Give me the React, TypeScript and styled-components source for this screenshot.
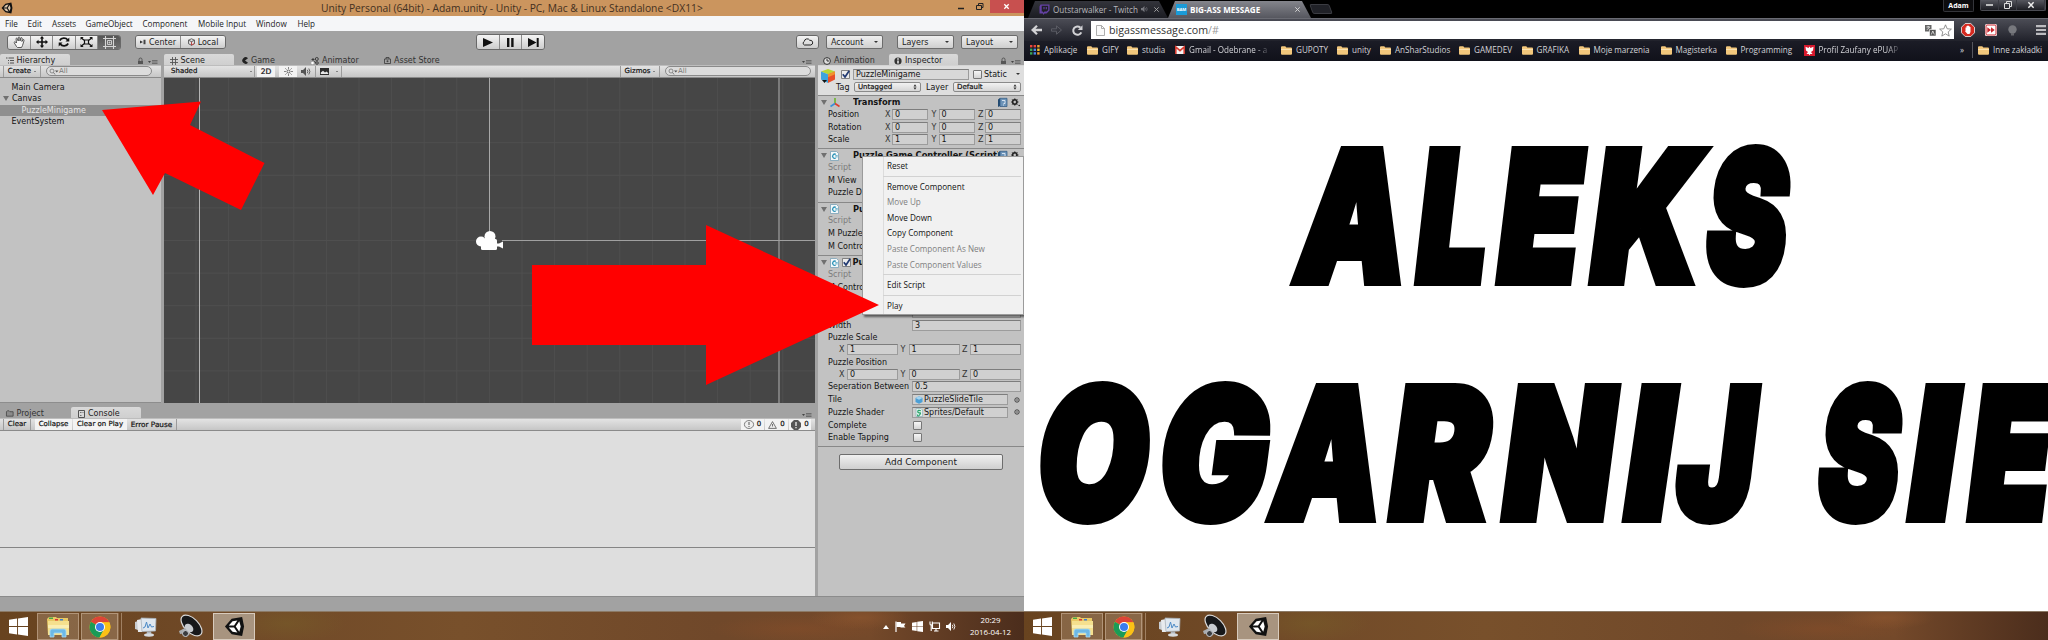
import React from "react";
import styled, { createGlobalStyle, css } from "styled-components";

const UNITY_FONT = '"DejaVu Sans", Verdana, sans-serif';
const SEGOE_FONT = '"Open Sans", "Segoe UI", sans-serif';

const Global = createGlobalStyle`
  * { box-sizing: border-box; }
  html, body { margin: 0; padding: 0; background: #fff; }
  svg { display: block; flex: none; overflow: visible; }
`;

/* ---------- shell ---------- */
const Desktop = styled.div`
  display: flex;
  width: 2048px;
  height: 640px;
  overflow: hidden;
`;
const Monitor = styled.section`
  position: relative;
  display: flex;
  flex-direction: column;
  width: 1024px;
  height: 640px;
  overflow: hidden;
  background: #fff;
`;
const Spacer = styled.div`
  flex: 1;
`;
const Gap = styled.div<{ $w: number }>`
  flex: none;
  width: ${(p) => p.$w}px;
`;

/* ---------- Unity window ---------- */
const UnityWindow = styled.div`
  display: flex;
  flex-direction: column;
  height: 611px;
  font: 8px/11px ${UNITY_FONT};
  color: #141414;
  white-space: nowrap;
`;
const TitleBar = styled.header`
  display: flex;
  flex: none;
  height: 16px;
  background: #cb955e;
  font: 10.29px/16px ${SEGOE_FONT};
  color: #43301f;
`;
const TitleIcon = styled.div`
  width: 321px;
  padding: 2px 0 0 1px;
`;
const WindowButtons = styled.div`
  display: flex;
  height: 13px;
  align-items: center;
`;
const CloseButton = styled.div`
  display: flex;
  align-items: center;
  justify-content: center;
  width: 34px;
  height: 13px;
  padding-right: 2px;
  background: #c8504f;
`;
const MenuBar = styled.nav`
  display: flex;
  flex: none;
  height: 15px;
  padding-left: 5px;
  background: #f5f6f8;
  font: 8.15px/15px ${SEGOE_FONT};
  color: #1c1c1c;
`;
const MenuEntry = styled.span<{ $w: number }>`
  width: ${(p) => p.$w}px;
`;
const Toolbar = styled.div`
  display: flex;
  flex: none;
  align-items: center;
  height: 23px;
  padding: 0 6px 1px 7px;
  background: #a2a2a2;
`;
const ButtonGroup = styled.div<{ $h?: number }>`
  display: flex;
  height: ${(p) => p.$h ?? 15}px;
  border: 1px solid #686868;
  border-radius: 3px;
  overflow: hidden;
`;
const ToolButton = styled.button<{ $w: number; $pressed?: boolean }>`
  display: flex;
  align-items: center;
  justify-content: center;
  gap: 3px;
  width: ${(p) => p.$w}px;
  padding: 0;
  border: 0;
  border-right: 1px solid #8b8b8b;
  font: inherit;
  color: #222;
  background: ${(p) => (p.$pressed ? "linear-gradient(#555,#707070)" : "linear-gradient(#f4f4f4,#cdcdcd)")};
  &:last-child { border-right: 0; }
`;
const DropButton = styled.button<{ $w: number }>`
  display: flex;
  align-items: center;
  justify-content: space-between;
  width: ${(p) => p.$w}px;
  height: 14px;
  padding: 0 4px;
  border: 1px solid #6c6c6c;
  border-radius: 2px;
  font: inherit;
  color: #222;
  background: linear-gradient(#efefef, #cfcfcf);
`;
const Caret = styled.i<{ $s?: number }>`
  border: solid transparent;
  border-width: ${(p) => p.$s ?? 2.5}px ${(p) => p.$s ?? 2.5}px 0;
  border-top-color: #333;
`;
const Workspace = styled.div`
  display: flex;
  flex: none;
  height: 542px;
  background: #a2a2a2;
`;
const DockColumn = styled.div`
  display: flex;
  flex-direction: column;
  width: 818px;
`;
const UpperDock = styled.div`
  display: flex;
  height: 349px;
`;
const Panel = styled.div<{ $w: number; $edge?: boolean }>`
  display: flex;
  flex-direction: column;
  width: ${(p) => p.$w}px;
  ${(p) => p.$edge && css`margin-right: 3px;`}
`;
const TabRow = styled.div<{ $h?: number }>`
  display: flex;
  flex: none;
  align-items: flex-end;
  height: ${(p) => p.$h ?? 11}px;
`;
const Tab = styled.div<{ $w: number; $on?: boolean; $pad?: number }>`
  display: flex;
  align-items: center;
  gap: 3px;
  width: ${(p) => p.$w}px;
  height: 11px;
  padding-top: 2px;
  padding-left: ${(p) => p.$pad ?? 6}px;
  border-radius: 2px 2px 0 0;
  color: ${(p) => (p.$on ? "#1c1c1c" : "#333")};
  ${(p) => p.$on && css`background: linear-gradient(#d9d9d9, #cfcfcf);`}
`;
const TabTools = styled.div`
  display: flex;
  align-items: flex-end;
  gap: 5px;
  margin-left: auto;
  padding: 0 3px 1px 0;
`;
const Strip = styled.div`
  display: flex;
  flex: none;
  align-items: stretch;
  height: 13px;
  border-bottom: 1px solid #8a8a8a;
  border-top: 1px solid #bdbdbd;
  background: linear-gradient(#e3e3e3, #c6c6c6);
  font-size: 7px;
  color: #111;
  -webkit-text-stroke: 0.2px #111;
`;
const StripCell = styled.div<{ $w: number; $on?: boolean; $line?: boolean; $size?: number }>`
  display: flex;
  flex: none;
  align-items: center;
  justify-content: center;
  gap: 3px;
  width: ${(p) => p.$w}px;
  font-size: ${(p) => p.$size ?? 7}px;
  ${(p) => p.$on && css`background: #f3f3f3;`}
  ${(p) => p.$line && css`border-right: 1px solid #9b9b9b;`}
`;
const StripText = styled.span<{ $w: number }>`
  flex: none;
  width: ${(p) => p.$w}px;
`;
const SearchField = styled.div<{ $w: number }>`
  display: flex;
  align-items: center;
  width: ${(p) => p.$w}px;
  height: 10px;
  margin-top: 0;
  padding-left: 2px;
  border: 1px solid #8a8a8a;
  border-radius: 5px;
  background: #dcdcdc;
  color: #777;
  font-size: 7px;
  -webkit-text-stroke: 0;
`;
const HierarchyList = styled.div`
  flex: 1;
  padding-top: 3.800px;
  background: #c2c2c2;
  border-bottom: 1px solid #8d8d8d;
`;
const HierarchyRow = styled.div<{ $indent: number; $on?: boolean }>`
  display: flex;
  align-items: center;
  gap: 3px;
  height: 11.4px;
  padding-left: ${(p) => p.$indent}px;
  ${(p) => p.$on && css`background: #8f8f8f; color: #e6e6e6;`}
`;
const SceneView = styled.div`
  flex: 1;
  overflow: hidden;
  background: #464646;
`;
const ConsoleBody = styled.div`
  display: flex;
  flex-direction: column;
  width: 815px;
  flex: 1;
  background: #dedede;
`;
const ConsoleLog = styled.div`
  height: 117px;
  border-bottom: 1px solid #858585;
`;
const StatusBar = styled.footer`
  flex: none;
  height: 15px;
  background: #a2a2a2;
  border-top: 1px solid #8b8b8b;
`;

/* ---------- Inspector ---------- */
const InspectorPanel = styled.aside`
  display: flex;
  flex-direction: column;
  width: 206px;
`;
const InspectorBody = styled.div`
  flex: 1;
  background: #c2c2c2;
`;
const ObjectHeader = styled.div`
  display: flex;
  height: 30px;
  padding: 2px 2px 0 2px;
  border-top: 1px solid #d4d4d4;
  background: #dedede;
`;
const ObjectFields = styled.div`
  flex: 1;
  display: flex;
  flex-direction: column;
`;
const HeaderLine = styled.div<{ $h: number }>`
  display: flex;
  align-items: center;
  height: ${(p) => p.$h}px;
`;
const Popup = styled.div<{ $w: number }>`
  display: flex;
  align-items: center;
  justify-content: space-between;
  width: ${(p) => p.$w}px;
  height: 10px;
  padding: 0 3px;
  border: 1px solid #8a8a8a;
  border-radius: 2px;
  background: linear-gradient(#f2f2f2, #d6d6d6);
  font-size: 7px;
  -webkit-text-stroke: 0.2px #111;
`;
const Check = styled.span`
  flex: none;
  width: 9px;
  height: 9px;
  border: 1px solid #777;
  border-radius: 1px;
  background: linear-gradient(#f6f6f6, #d4d4d4);
`;
const Field = styled.span<{ $w: number; $light?: boolean }>`
  display: flex;
  flex: none;
  align-items: center;
  gap: 1px;
  width: ${(p) => p.$w}px;
  height: 11px;
  padding-left: 2px;
  border: 1px solid #9c9c9c;
  border-top-color: #7d7d7d;
  background: ${(p) => (p.$light ? "#d8d8d8" : "#d0d0d0")};
`;
const ComponentBlock = styled.div<{ $h: number }>`
  height: ${(p) => p.$h}px;
  overflow: hidden;
  border-top: 1px solid #888;
`;
const ComponentHead = styled.div`
  display: flex;
  align-items: center;
  height: 12px;
  padding: 1px 4px 0 3px;
  font-weight: bold;
  font-size: 8.3px;
`;
const HeadIcons = styled.div<{ $w: number }>`
  display: flex;
  flex: none;
  align-items: center;
  gap: 3px;
  width: ${(p) => p.$w}px;
`;
const HeadTitle = styled.span`
  flex: 1;
  min-width: 0;
  overflow: hidden;
`;
const PropRow = styled.div<{ $h?: number; $dim?: boolean }>`
  display: flex;
  align-items: center;
  height: ${(p) => p.$h ?? 12.7}px;
  padding-left: 10px;
  ${(p) => p.$dim && css`color: #7c7c7c;`}
`;
const PropLabel = styled.span<{ $w: number }>`
  flex: none;
  width: ${(p) => p.$w}px;
`;
const Axis = styled.span<{ $w: number }>`
  flex: none;
  width: ${(p) => p.$w}px;
  color: #333;
`;
const AddArea = styled.div`
  padding: 7px 0 0 21px;
  border-top: 1px solid #888;
`;
const AddButton = styled.button`
  display: block;
  width: 164px;
  height: 16px;
  padding: 0;
  border: 1px solid #6d6d6d;
  border-radius: 2px;
  background: linear-gradient(#f0f0f0, #cfcfcf);
  font: 8.93px/14px ${UNITY_FONT};
  color: #222;
`;

/* ---------- context menu and arrows (overlays) ---------- */
const ContextMenu = styled.div`
  position: absolute;
  left: 862px;
  top: 156px;
  width: 161.5px;
  height: 159px;
  padding: 1px 2px 1px 20px;
  border: 1px solid #9b9b9b;
  background: linear-gradient(90deg, #f1f1f1 20px, #dcdcdc 20px, #dcdcdc 21px, #f1f1f1 21px);
  box-shadow: 2px 2px 2px rgba(0, 0, 0, 0.55);
  font: 8.15px/15.65px ${SEGOE_FONT};
  white-space: nowrap;
`;
const MenuItem = styled.div<{ $dim?: boolean }>`
  height: 15.65px;
  padding-left: 4px;
  color: ${(p) => (p.$dim ? "#808080" : "#111")};
`;
const MenuRule = styled.hr`
  height: 1px;
  margin: 2px 0 1.9px;
  border: 0;
  background: #d2d2d2;
`;
const ArrowLayer = styled.svg`
  position: absolute;
  left: 0;
  top: 0;
`;

/* ---------- taskbar ---------- */
const TaskbarRow = styled.footer`
  display: flex;
  flex: none;
  align-items: center;
  height: 29px;
  margin-top: auto;
  padding-top: 1px;
  border-top: 1px solid #8c7a66;
  background:
    radial-gradient(ellipse 60px 20px at 28% 40%, rgba(120, 95, 40, 0.5), transparent),
    radial-gradient(ellipse 90px 14px at 78% 60%, rgba(150, 80, 40, 0.3), transparent),
    radial-gradient(ellipse 50px 12px at 84% 20%, rgba(160, 95, 50, 0.4), transparent),
    linear-gradient(90deg, #68431f, #714a28 25%, #78502b 45%, #70482a 70%, #74492a 85%, #4b2d1c);
`;
const TaskSlot = styled.div<{ $w: number; $state?: "open" | "active" }>`
  display: flex;
  flex: none;
  align-items: center;
  justify-content: center;
  width: ${(p) => p.$w}px;
  height: 27px;
  ${(p) => p.$state === "open" && css`background: rgba(255, 235, 215, 0.2); border: 1px solid rgba(255, 235, 215, 0.35);`}
  ${(p) => p.$state === "active" && css`background: #a8947f; border: 1px solid #d8cbbd;`}
`;
const StackEdge = styled.div`
  width: 4px;
  height: 27px;
  margin-right: 10px;
  border-right: 1px solid rgba(255, 235, 215, 0.35);
  border-left: 1px solid rgba(255, 235, 215, 0.2);
`;
const Tray = styled.div`
  display: flex;
  align-items: center;
  gap: 6px;
  margin-left: auto;
`;
const Clock = styled.div`
  width: 55px;
  margin: -2px 6px 0 1px;
  font: 7.9px/12px ${SEGOE_FONT};
  text-align: center;
  color: #fff;
`;

/* ---------- browser ---------- */
const TabStrip = styled.div`
  display: flex;
  flex: none;
  height: 18px;
  background: #000;
  font: 8.1px/16px ${SEGOE_FONT};
  white-space: nowrap;
`;
const BrowserTab = styled.div<{ $w: number; $on?: boolean; $pad: number }>`
  display: flex;
  flex: none;
  align-items: center;
  gap: 3px;
  width: ${(p) => p.$w}px;
  height: 17px;
  margin-top: 1px;
  padding: 0 9px 0 ${(p) => p.$pad}px;
  clip-path: polygon(7px 0, calc(100% - 9px) 0, 100% 100%, 0 100%);
  background: ${(p) => (p.$on ? "linear-gradient(#84858c,#56575f)" : "linear-gradient(#33343b,#1b1c22)")};
  color: ${(p) => (p.$on ? "#fff" : "#b9b9bd")};
  font-weight: ${(p) => (p.$on ? 700 : 400)};
`;
const TabTitle = styled.span<{ $w: number }>`
  width: ${(p) => p.$w}px;
`;
const NewTab = styled.div`
  width: 20px;
  height: 10px;
  margin: 4px 0 0 0;
  border: 1px solid #3b3c42;
  border-radius: 2px;
  transform: skewX(20deg);
  background: #202127;
`;
const UserChip = styled.div`
  width: 31px;
  height: 12px;
  margin-right: 6px;
  border: 1px solid #34353a;
  border-top: 0;
  border-radius: 0 0 2px 2px;
  background: #0c0c0e;
  color: #fff;
  font: bold 7px/12px ${SEGOE_FONT};
  text-align: center;
`;
const ChromeControls = styled.div`
  display: flex;
  width: 66px;
  height: 11px;
  margin-right: 2px;
  border: 1px solid #4a4b52;
  border-top: 0;
  border-radius: 0 0 2px 2px;
  background: linear-gradient(#55565e, #1d1e24);
`;
const ChromeControl = styled.div<{ $w: number }>`
  display: flex;
  align-items: center;
  justify-content: center;
  width: ${(p) => p.$w}px;
  border-right: 1px solid #3a3b42;
`;
const NavBar = styled.div`
  display: flex;
  flex: none;
  align-items: center;
  height: 23px;
  padding: 0 2px 0 7px;
  border-top: 1px solid #6a6b73;
  background: linear-gradient(#4b4c55, #21222b);
`;
const AddressBox = styled.div`
  display: flex;
  align-items: center;
  width: 863px;
  height: 18px;
  margin: 0 7px 0 8px;
  padding: 0 2px 0 5px;
  background: #fff;
  font: 10.68px/18px ${SEGOE_FONT};
  color: #333;
`;
const UrlText = styled.span`
  margin-left: 4px;
  em { font-style: normal; color: #999; }
`;
const BookmarkBar = styled.div`
  display: flex;
  flex: none;
  align-items: center;
  height: 20px;
  padding-left: 6px;
  padding-bottom: 2px;
  background: linear-gradient(#1b1c26, #10111a);
  font: 8.1px/14px ${SEGOE_FONT};
  color: #d4d4d8;
  white-space: nowrap;
`;
const Bookmark = styled.div<{ $w: number; $fade?: number }>`
  display: flex;
  flex: none;
  align-items: center;
  gap: 4px;
  width: ${(p) => p.$w}px;
  ${(p) => p.$fade && css`-webkit-mask-image: linear-gradient(90deg, #000 ${p.$fade - 15}px, transparent ${p.$fade}px);`}
`;
const BarDivider = styled.i`
  width: 1px;
  height: 16px;
  margin-right: 5px;
  background: #55565e;
`;
const Page = styled.main`
  flex: 1;
  padding-top: 55px;
  overflow: hidden;
  background: #fff;
`;
const BigLine = styled.div<{ $left: number }>`
  display: flex;
  height: 236.6px;
  padding-left: ${(p) => p.$left}px;
  font: italic 900 179px/200px Inter, sans-serif;
  color: #000;
  -webkit-text-stroke: 10px #000;
`;
const BigLetter = styled.span<{ $advance: number; $stretch: number; $shift: number }>`
  flex: none;
  display: block;
  width: ${(p) => p.$advance}px;
  transform-origin: 0 0;
  transform: translateX(${(p) => p.$shift}px) scaleX(${(p) => p.$stretch});
`;

/* ---------- icons ---------- */
const Fold = () => (
  <svg width="6" height="5" viewBox="0 0 6 5"><path d="M0 0h6L3 5z" fill="#707070" /></svg>
);
const UnityLogo = ({ size = 11, plate = "#fff" }: { size?: number; plate?: string }) => (
  <svg width={size} height={size} viewBox="0 0 22 22">
    <path d="M1 11 8 3l11-2 2 10-2 10-11-2z" fill="#111" />
    <path d="M5 10 9 5.500l5-.8-3.500 5.300zM5 12h5.500l3.500 5.300-5-.8zM12.300 11l3.700-5.600 1.500 5.600-1.500 5.600z" fill={plate} />
  </svg>
);
const PanelMenu = () => (
  <svg width="10" height="4" viewBox="0 0 10 4"><path d="M0 1h3L1.500 3z" fill="#444" /><path d="M4 .5h5.500M4 2h5.500M4 3.500h5.500" stroke="#666" strokeWidth=".9" /></svg>
);
const Lock = () => (
  <svg width="5" height="6" viewBox="0 0 5 6"><path d="M1 3V1.500a1.500 1.500 0 0 1 3 0V3" fill="none" stroke="#555" /><path d="M0 3h5v3H0z" fill="#555" /></svg>
);
const Magnifier = () => (
  <svg width="10" height="7" viewBox="0 0 10 7"><circle cx="3" cy="3" r="2" fill="none" stroke="#777" strokeWidth=".8" /><path d="M4.500 4.500 6 6.500" stroke="#777" /><path d="M6 2.500h3.500L7.750 4.500z" fill="#555" /></svg>
);
const SceneIcon = () => (
  <svg width="8" height="8" viewBox="0 0 8 8"><path d="M2.500 0v8M5.500 0v8M0 2.500h8M0 5.500h8" stroke="#555" strokeWidth=".9" /></svg>
);
const GameIcon = () => (
  <svg width="6" height="7" viewBox="0 0 6 7"><path d="M6 1.200A3.300 3.300 0 1 0 6 5.800L3 3.500z" fill="#222" /></svg>
);
const AnimatorIcon = () => (
  <svg width="8" height="8" viewBox="0 0 8 8"><g fill="none" stroke="#333" strokeWidth=".9"><circle cx="5.800" cy="2" r="1.500" /><circle cx="6" cy="6" r="1.300" /><path d="M2 1v3M.5 2.500h3M3 4.500l2 1" /></g><circle cx="1.500" cy="6" r="1.300" fill="#fff" /></svg>
);
const StoreIcon = () => (
  <svg width="7" height="7" viewBox="0 0 7 7"><path d="M.5 2h6v4.500h-6zM2 2V.5h3V2" fill="none" stroke="#444" strokeWidth=".9" /><circle cx="3.500" cy="4.200" r="1" fill="#444" /></svg>
);
const ListIcon = () => (
  <svg width="8" height="7" viewBox="0 0 8 7"><path d="M0 1h1.500M2.500 1H8M2 3.500h1M4 3.500h4M2 6h1M4 6h4" stroke="#444" strokeWidth=".9" /></svg>
);
const FolderOutline = () => (
  <svg width="8" height="7" viewBox="0 0 9 7"><path d="M.5 6.500v-5l1-1h2l1 1h3.500v5z" fill="#8b8b8b" stroke="#444" strokeWidth=".9" /></svg>
);
const ConsoleIcon = () => (
  <svg width="7" height="8" viewBox="0 0 7 8"><path d="M.5.5h6v7h-6z" fill="#d8d8d8" stroke="#444" strokeWidth=".9" /><path d="M2 2.500h1.500M2 5.500h1.500M4.500 2.500h1" stroke="#555" strokeWidth=".8" /></svg>
);
const HandIcon = () => (
  <svg width="13" height="12" viewBox="0 0 13 12"><path d="M3.500 10.500 1 6.500q.5-1.200 1.800-.2l.7.7L3 2.500q.9-.9 1.500.3L5.200 5 5.300 1.300q.9-.9 1.500.2L7 5l.9-3.200q1-.6 1.300.5L8.900 5.500l1.300-2q1.100 0 .8 1.200L9.500 9.500 8.500 11.500h-4z" fill="#f6f6f6" stroke="#333" strokeWidth=".8" /></svg>
);
const MoveIcon = () => (
  <svg width="12" height="12" viewBox="0 0 12 12"><path d="M6 0l2.200 2.500H6.800v2.700h2.700V3.800L12 6 9.500 8.200V6.800H6.800v2.700h1.400L6 12 3.800 9.500h1.400V6.800H2.500v1.400L0 6l2.500-2.200v1.400h2.700V2.500H3.800z" fill="#111" /></svg>
);
const RotateIcon = () => (
  <svg width="12" height="12" viewBox="0 0 12 12"><path d="M1.800 4.500A4.500 3.800 0 0 1 9.800 4M10.200 7.500A4.500 3.800 0 0 1 2.200 8" fill="none" stroke="#111" strokeWidth="1.700" /><path d="M11.300 1.500v4H7.500zM.7 10.500v-4h3.800z" fill="#111" /></svg>
);
const ScaleIcon = () => (
  <svg width="13" height="12" viewBox="0 0 13 12"><path d="M4.500 4h4v4h-4z" fill="none" stroke="#111" strokeWidth="1.200" /><path d="M.5 1h3.200L.5 3.900zM12.500 1v2.900L9.300 1zM.5 11V8.100L3.700 11zM12.500 11H9.300l3.200-2.900z" fill="#111" /><path d="M1.500 2 4 4.300M11.500 2 9 4.300M1.500 10 4 7.700M11.500 10 9 7.700" stroke="#111" strokeWidth="1.200" /></svg>
);
const RectIcon = () => (
  <svg width="13" height="13" viewBox="0 0 13 13"><path d="M2.500 0v13M10.500 0v13M0 2.500h13M0 10.500h13" stroke="#d5d5d5" strokeWidth="1.100" /><path d="M4.500 4.500h4v4h-4z" fill="none" stroke="#ccc" /><circle cx="6.500" cy="6.500" r="1" fill="#ccc" /></svg>
);
const PivotIcon = () => (
  <svg width="6" height="6" viewBox="0 0 6 6"><path d="M0 1.500 3 3 0 4.500z" fill="#333" /><path d="M3.500.8h2v4.400h-2z" fill="#444" /></svg>
);
const LocalIcon = () => (
  <svg width="7" height="8" viewBox="0 0 7 8"><path d="M.5 2.200 3.500.8l3 1.400v3.500l-3 1.600-3-1.600zM.5 2.200l3 1.500 3-1.500M3.500 3.700v3.500" fill="none" stroke="#444" strokeWidth=".8" /><path d="M3.500 3.800v3.200l3-1.500" fill="none" stroke="#c44" strokeWidth=".8" /></svg>
);
const PlayIcon = () => <svg width="10" height="9" viewBox="0 0 10 9"><path d="M0 0l10 4.500L0 9z" fill="#111" /></svg>;
const PauseIcon = () => <svg width="7" height="9" viewBox="0 0 7 9"><path d="M0 0h2.400v9H0zM4.200 0h2.400v9H4.200z" fill="#111" /></svg>;
const StepIcon = () => <svg width="11" height="9" viewBox="0 0 11 9"><path d="M0 0l8.500 4.500L0 9zM8.700 0h2v9h-2z" fill="#111" /></svg>;
const CloudIcon = () => (
  <svg width="11" height="8" viewBox="0 0 11 8"><path d="M2.300 7A2 2 0 0 1 2.300 3.400 2.900 2.900 0 0 1 7.700 2.300 2.400 2.400 0 0 1 8.800 7z" fill="none" stroke="#222" /></svg>
);
const SunIcon = () => (
  <svg width="9" height="9" viewBox="0 0 9 9"><circle cx="4.500" cy="4.500" r="1.500" fill="none" stroke="#444" strokeWidth=".8" /><path d="M4.500 0v2M4.500 7v2M0 4.500h2M7 4.500h2M1.300 1.300l1.300 1.300M6.400 6.400l1.300 1.300M1.300 7.700l1.300-1.300M6.400 2.600l1.300-1.300" stroke="#555" strokeWidth=".7" /></svg>
);
const SoundIcon = ({ color = "#555", s = 10 }: { color?: string; s?: number }) => (
  <svg width={s} height={s * 0.9} viewBox="0 0 10 9"><path d="M0 3h2l3-3v9L2 6H0z" fill={color} /><path d="M6.300 2.800q1.200 1.700 0 3.400M7.800 1.500q2.200 3 0 6" fill="none" stroke={color} strokeWidth=".9" /></svg>
);
const PictureIcon = () => (
  <svg width="9" height="7" viewBox="0 0 9 7"><path d="M0 0h9v7H0z" fill="#2c2c2c" /><path d="M.8 6V4.500L3 2.800l2 1.700 1.500-1L8.200 5v1z" fill="#e8e8e8" /></svg>
);
const ClockIcon = () => (
  <svg width="8" height="8" viewBox="0 0 8 8"><circle cx="4" cy="4" r="3.400" fill="#ddd" stroke="#222" strokeWidth=".9" /><path d="M4 1.800V4h2" fill="none" stroke="#222" strokeWidth=".9" /></svg>
);
const InfoIcon = () => (
  <svg width="8" height="8" viewBox="0 0 8 8"><circle cx="4" cy="4" r="3.600" fill="#333" /><path d="M4 1.300v1.400M4 3.500v3" stroke="#fff" strokeWidth="1.400" /></svg>
);
const CubeIcon = () => (
  <svg width="16" height="17" viewBox="0 0 16 17"><path d="M8 1l7 2.500-7 2.700L1 3.500z" fill="#b9d634" /><path d="M1 3.500l7 2.700V15l-7-3.500z" fill="#3fa4dc" /><path d="M15 3.500 8 6.200V15l7-3.500z" fill="#e8502a" /><path d="M15 3.500 8 6.200v3l7-3z" fill="#f2932c" /><path d="M2 12h5L4.500 15z" fill="#111" /></svg>
);
const AxesIcon = () => (
  <svg width="10" height="9" viewBox="0 0 10 9"><path d="M5 5.500V0" stroke="#6cb52d" strokeWidth="1.600" /><path d="M5 5.500.5 8.500" stroke="#3a8fd8" strokeWidth="1.600" /><path d="M5 5.500 9.500 8.500" stroke="#e03c2b" strokeWidth="1.600" /></svg>
);
const ScriptIcon = () => (
  <svg width="9" height="10" viewBox="0 0 9 10"><path d="M.5.5h6L8.500 2.500v7h-8z" fill="#f4f8fa" stroke="#7aa2b8" strokeWidth=".8" /><path d="M5.800 3.400A2.100 2.100 0 1 0 5.800 7" fill="none" stroke="#2b93b8" strokeWidth="1.300" /><path d="M5.300 4.600h2.400M5.300 5.900h2.400" stroke="#2b93b8" strokeWidth=".7" /></svg>
);
const BookIcon = () => (
  <svg width="9" height="9" viewBox="0 0 9 9"><path d="M0 1.500 2 0v8L0 9z" fill="#234a70" /><path d="M2 .3h7v8.200H2z" fill="#6c93b8" stroke="#2d5680" strokeWidth=".7" /><path d="M4 2.500h3v3H5.500M5.500 6.500v1" fill="none" stroke="#dfeaf5" strokeWidth=".9" /></svg>
);
const GearIcon = () => (
  <svg width="9" height="9" viewBox="0 0 9 9"><circle cx="3.800" cy="4" r="2.200" fill="none" stroke="#222" strokeWidth="1.500" /><path d="M3.800.3v7.400M.1 4h7.400M1.200 1.400l5.200 5.200M6.400 1.400 1.200 6.600" stroke="#222" strokeWidth=".9" /><circle cx="3.800" cy="4" r="1.200" fill="#c2c2c2" /><circle cx="8.200" cy="7.500" r=".8" fill="#222" /></svg>
);
const TickBox = styled.span<{ $gap: number }>`
  flex: none;
  margin-right: ${(p) => p.$gap}px;
`;
const Tick = ({ gap = 4 }: { gap?: number }) => (
  <TickBox $gap={gap}>
    <svg width="9" height="9" viewBox="0 0 9 9"><path d="M.5.5h8v8h-8z" fill="#ececec" stroke="#777" strokeWidth=".9" /><path d="M1.800 4.200 4 7 8.200.8" fill="none" stroke="#223a72" strokeWidth="1.700" /></svg>
  </TickBox>
);
const UpDown = () => (
  <svg width="4" height="6" viewBox="0 0 4 6"><path d="M.5 2.500 2 .3l1.500 2.200zM.5 3.500h3L2 5.700z" fill="#333" /></svg>
);
const TargetIcon = () => (
  <svg width="6" height="6" viewBox="0 0 6 6"><circle cx="3" cy="3" r="2.200" fill="none" stroke="#333" strokeWidth=".9" /><circle cx="3" cy="3" r=".7" fill="#333" /></svg>
);
const PrefabIcon = () => (
  <svg width="8" height="8" viewBox="0 0 8 8"><path d="M4 .3 7.500 2v4L4 7.700.5 6V2z" fill="#4b9fd6" /><path d="M4 .3 7.500 2 4 3.700.5 2z" fill="#a5d4f0" /></svg>
);
const ShaderIcon = () => (
  <svg width="8" height="9" viewBox="0 0 8 9"><path d="M1 .5h5l1.500 1.500v6.500H1z" fill="#dff3ea" stroke="#8ab" strokeWidth=".6" /><path d="M5.800 2.800Q3 1.800 2.800 3.400T4.500 4.800 4.500 7 2.500 6.500" fill="none" stroke="#2aa36a" strokeWidth="1.200" /></svg>
);
const SmallX = ({ s = 5, color = "#fff", w = 1.2 }: { s?: number; color?: string; w?: number }) => (
  <svg width={s} height={s} viewBox="0 0 5 5"><path d="M.3.3l4.400 4.400M4.700.3.300 4.700" stroke={color} strokeWidth={w} /></svg>
);

const WindowsFlag = ({ size }: { size: number }) => (
  <svg width={size} height={size} viewBox="0 0 20 20"><path d="M0 3l8.500-1.300v7.800H0zM9.500 1.500 20 0v9.500H9.500zM0 10.500h8.500v7.800L0 17zM9.500 10.500H20V20L9.500 18.500z" fill="#fff" /></svg>
);
const ExplorerIcon = () => (
  <svg width="24" height="22" viewBox="0 0 24 22"><path d="M1 3 3 1h7l1 1h11v17H2z" fill="#e9c964" /><path d="M3 1.500h4v1.500H3z" fill="#48a848" /><path d="M9 3h3v1.500H9z" fill="#d33" /><path d="M14 3h3v1.500h-3z" fill="#3a7fd0" /><path d="M2 5h21v14H2z" fill="#f5e08e" /><path d="M2 9h21v3H2z" fill="#faeeb2" /><path d="M4 21v-6q0-2 2-2h12q2 0 2 2v6h-4v-4H8v4z" fill="#6db9e6" stroke="#a9dcf5" strokeWidth=".8" /></svg>
);
const ChromeIcon = () => (
  <svg width="22" height="22" viewBox="0 0 22 22">
    <circle cx="11" cy="11" r="10.500" fill="#fbc116" />
    <path d="M11 11 1.900 5.750A10.500 10.500 0 0 1 20.100 5.750L20.500 6.500H11z" fill="#dd4437" />
    <path d="M11 11 1.900 5.750A10.500 10.500 0 0 0 10.500 21.490L15 13.500z" fill="#1a9b57" />
    <path d="M11 6.300h9.300a10.500 10.500 0 0 1-9.800 15.200L15 13.500z" fill="#fbc116" />
    <circle cx="11" cy="11" r="5" fill="#fff" /><circle cx="11" cy="11" r="4" fill="#3b7ded" />
  </svg>
);
const MonitorIcon = () => (
  <svg width="22" height="20" viewBox="0 0 22 20"><path d="M0 5l6-2v11l-6-2z" fill="#c8cdd2" /><path d="M2 3l5-1v13H3z" fill="#e8ebee" /><path d="M6 1l15 .5-.5 12.500L7 14.500z" fill="#dfe7ef" stroke="#a9b2ba" strokeWidth=".8" /><path d="M8 11l2-1 1.500-5 1.500 6 2-4 1.500 3 2.500-.5" fill="none" stroke="#4c8ac6" /><path d="M12 14.500h4l.5 2.500h-5z" fill="#aeb4ba" /><ellipse cx="14" cy="18" rx="5" ry="1.700" fill="#d7dbdf" /></svg>
);
const SpeakerIcon = () => (
  <svg width="25" height="23" viewBox="0 0 25 23"><ellipse cx="13.500" cy="10.500" rx="13" ry="7" transform="rotate(45 13.500 10.500)" fill="#17181a" stroke="#d9d9d9" strokeWidth="1.200" /><ellipse cx="11" cy="13" rx="5" ry="3.600" transform="rotate(45 11 13)" fill="#c9ccd0" /><path d="M1 16l6-3 5 6-4 3q-2-4-6-3z" fill="#a9adb1" /><circle cx="7.500" cy="18.500" r="3" fill="#3a3c3f" stroke="#c9ccd0" /></svg>
);
const FlagTray = () => (
  <svg width="11" height="11" viewBox="0 0 11 11"><path d="M1 .5v10.500" stroke="#fff" strokeWidth="1.200" /><path d="M1.500 1h4.500v1.500h4.500L9 5l1.500 1.500H5.500V6h-4z" fill="#fff" /></svg>
);
const NetTray = () => (
  <svg width="11" height="11" viewBox="0 0 11 11"><path d="M3.500 2h7v5.500h-7zM5 10h4.500M7 7.500V10M1 .5v2.500q0 1 1.200 1T3.300 3V.5M2.200 4v6" fill="none" stroke="#fff" strokeWidth="1.100" /></svg>
);

const BookFolder = () => (
  <svg width="11" height="9" viewBox="0 0 11 9"><path d="M0 1.200Q0 .3 1 .3h3.300l1 1.200H10q1 0 1 .9v5.400q0 .9-1 .9H1q-1 0-1-.9z" fill="#f2c77c" /><path d="M0 3h11v1H0z" fill="#fbe2b0" /></svg>
);
const AppsIcon = () => (
  <svg width="10" height="10" viewBox="0 0 10 10">
    {["#e8453c", "#e8453c", "#f0a030", "#3aa757", "#4a88e8", "#f0c030", "#3aa757", "#4a88e8", "#f0a030"].map((c, i) => (
      <rect key={i} x={(i % 3) * 3.6} y={Math.floor(i / 3) * 3.6} width="2.400" height="2.400" fill={c} />
    ))}
  </svg>
);
const GmailIcon = () => (
  <svg width="10" height="8" viewBox="0 0 10 8"><path d="M0 0h10v8H0z" fill="#f3f3f3" /><path d="M.8 8V1L5 4.700 9.200 1v7" fill="none" stroke="#d63b30" strokeWidth="1.600" /></svg>
);
const EagleIcon = () => (
  <svg width="11" height="11" viewBox="0 0 11 11"><path d="M0 0h11v11H0z" fill="#d7192d" /><path d="M5.500 1.500 6.500 3 9.500 1.800 9 5.500 7 7l1.500 2H6.300l-.8 1.200L4.700 9H2.500L4 7 2 5.500 1.500 1.800l3 1.200z" fill="#fff" /></svg>
);
const TwitchIcon = () => (
  <svg width="11" height="11" viewBox="0 0 11 11"><path d="M1.500.5h9v6l-3 3h-2L4 11V9.500H.5v-7z" fill="#6441a5" /><path d="M2.700 1.800h6.500v4.200L7.700 7.500H5.500L4 8.800V7.500H2.700z" fill="#1f2026" /><path d="M5 3v2.300M7.300 3v2.300" stroke="#6441a5" strokeWidth="1.100" /></svg>
);
const BamBadge = styled.span`
  flex: none;
  width: 11px;
  height: 11px;
  background: #1a9bd8;
  color: #fff;
  font: bold 4.2px/11px ${SEGOE_FONT};
  text-align: center;
`;
const BackIcon = ({ dim }: { dim?: boolean }) => (
  <svg width="11" height="10" viewBox="0 0 11 10">
    {dim ? <path d="M.5 3.800h5v-3L10.500 5 5.500 9.200v-3h-5z" fill="none" stroke="#5b5c64" /> : <path d="M11 3.800v2.400H4.500L6.800 8.500 5.200 10 0 5 5.200 0l1.600 1.500-2.300 2.300z" fill="#d2d2d5" />}
  </svg>
);
const ReloadIcon = () => (
  <svg width="11" height="11" viewBox="0 0 11 11"><path d="M9.300 7.300A4.200 4.200 0 1 1 8.300 2.500" fill="none" stroke="#d2d2d5" strokeWidth="2" /><path d="M10.500.3v4.700H5.800z" fill="#d2d2d5" /></svg>
);
const PageIcon = () => (
  <svg width="9" height="11" viewBox="0 0 9 11"><path d="M.5.5h5l3 3v7h-8zM5.500.5v3h3" fill="#fafafa" stroke="#999" strokeWidth=".8" /></svg>
);
const TranslateIcon = () => (
  <svg width="11" height="11" viewBox="0 0 11 11"><path d="M0 0h6.500v6.500H0z" fill="#666" /><path d="M4.500 4.500H11V11H4.500z" fill="#555" stroke="#fff" strokeWidth=".6" /><path d="M1.500 2h3.500M3.200 1v1.200M2 4.800l2.500-2.600M6.300 9.500l1.500-3.500 1.500 3.500" fill="none" stroke="#fff" strokeWidth=".7" /></svg>
);
const StarIcon = () => (
  <svg width="13" height="13" viewBox="0 0 13 13"><path d="M6.500.8l1.700 4 4.200.3-3.200 2.800 1 4.200-3.700-2.300-3.700 2.300 1-4.200L.6 5.100l4.200-.3z" fill="none" stroke="#777" strokeWidth=".8" /></svg>
);
const AdblockIcon = () => (
  <svg width="14" height="14" viewBox="0 0 14 14"><path d="M4.200.5h5.600l3.700 3.700v5.600l-3.700 3.700H4.200L.5 9.800V4.200z" fill="#d62a20" stroke="#f2f2f2" strokeWidth=".8" /><path d="M4.500 8V4.500h1V3h1v-.5h1V3h1v1h1v5L8.500 11h-2L4 8.300z" fill="#fff" /></svg>
);
const ForwardIcon = () => (
  <svg width="12" height="12" viewBox="0 0 12 12"><rect width="12" height="12" rx="1.500" fill="#fff" /><rect x="1" y="1" width="10" height="10" rx="1" fill="#fff" stroke="#c9252c" /><path d="M2.300 3.200 6 6 2.300 8.800zM6 3.200 9.700 6 6 8.800z" fill="#c9252c" /></svg>
);
const BulbIcon = () => (
  <svg width="9" height="11" viewBox="0 0 9 11"><circle cx="4.500" cy="4.500" r="4.200" fill="#77787d" /><path d="M3 8h3v2.500H3z" fill="#66676c" /></svg>
);
const BurgerIcon = () => (
  <svg width="10" height="10" viewBox="0 0 10 10"><path d="M0 1.200h10M0 5h10M0 8.800h10" stroke="#bcbcc0" strokeWidth="2.200" /></svg>
);

/* ---------- scene drawing ---------- */
const SceneCanvas = () => {
  const cols = Array.from({ length: 19 }, (_, i) => 32 + i * 32.6);
  const rows = Array.from({ length: 11 }, (_, i) => -0.5 + i * 32.6);
  return (
    <svg width="651" height="325" viewBox="0 0 651 325">
      {cols.map((x) => <path key={x} d={`M${x} 0V325`} stroke="#4f4f4f" />)}
      {rows.map((y) => <path key={y} d={`M0 ${y}H651`} stroke="#4f4f4f" />)}
      <path d="M35.500 0v325" stroke="#b5b5b5" />
      <path d="M325.500 0v155" stroke="#a8a8a8" />
      <path d="M615 0v325" stroke="#8a8a8a" strokeWidth="1.600" />
      <path d="M338 162.500h313" stroke="#a0a0a0" />
      <g fill="#fff">
        <circle cx="317" cy="163.500" r="5" /><circle cx="326" cy="158.500" r="5.500" />
        <rect x="317" y="161" width="16" height="11" rx="1.500" />
        <path d="M332 165.500l3 0 4-2v7l-4-2h-3z" />
      </g>
    </svg>
  );
};

const Search = ({ w }: { w: number }) => <SearchField $w={w}><Magnifier />All</SearchField>;

/* ---------- unity parts ---------- */
const MENUS: [string, number][] = [["File", 22.5], ["Edit", 24.5], ["Assets", 33.5], ["GameObject", 57], ["Component", 55.5], ["Mobile Input", 58], ["Window", 41.5], ["Help", 30]];

const Vector = ({ label, values }: { label: string; values: number[] }) => (
  <PropRow>
    <PropLabel $w={57}>{label}</PropLabel>
    {["X", "Y", "Z"].map((a, i) => (
      <React.Fragment key={a}>
        <Axis $w={7}>{a}</Axis>
        <Field $w={36}>{values[i]}</Field>
        <Gap $w={3.5} />
      </React.Fragment>
    ))}
  </PropRow>
);
const WideVector = ({ values }: { values: number[] }) => (
  <PropRow $h={11}>
    <Gap $w={11} />
    {["X", "Y", "Z"].map((a, i) => (
      <React.Fragment key={a}>
        <Axis $w={8}>{a}</Axis>
        <Field $w={51}>{values[i]}</Field>
        <Gap $w={2.5} />
      </React.Fragment>
    ))}
  </PropRow>
);
const ScriptHead = ({ title, checked }: { title: string; checked?: boolean }) => (
  <ComponentHead>
    <HeadIcons $w={checked ? 20.5 : 32}><Fold /><ScriptIcon /></HeadIcons>
    {checked && <Tick gap={2} />}
    {title}
  </ComponentHead>
);

const Inspector = () => (
  <InspectorPanel>
    <TabRow>
      <Tab $w={71} $pad={5}><ClockIcon />Animation</Tab>
      <Tab $w={69} $pad={5} $on><InfoIcon />Inspector</Tab>
      <TabTools><Lock /><PanelMenu /></TabTools>
    </TabRow>
    <InspectorBody>
      <ObjectHeader>
        <CubeIcon />
        <ObjectFields>
          <HeaderLine $h={12}>
            <Gap $w={5} /><Tick gap={3} /><Field $w={116} $light>PuzzleMinigame</Field>
            <Gap $w={4} /><Check /><Gap $w={2} />Static<Spacer /><Caret /><Gap $w={2} />
          </HeaderLine>
          <HeaderLine $h={14}>
            <PropLabel $w={18}>Tag</PropLabel><Popup $w={67}>Untagged<UpDown /></Popup>
            <Gap $w={5} /><PropLabel $w={27}>Layer</PropLabel><Popup $w={68}>Default<UpDown /></Popup>
          </HeaderLine>
        </ObjectFields>
      </ObjectHeader>
      <ComponentBlock $h={53}>
        <ComponentHead>
          <HeadIcons $w={32}><Fold /><AxesIcon /></HeadIcons><HeadTitle>Transform</HeadTitle><BookIcon /><Gap $w={4} /><GearIcon />
        </ComponentHead>
        <Vector label="Position" values={[0, 0, 0]} />
        <Vector label="Rotation" values={[0, 0, 0]} />
        <Vector label="Scale" values={[1, 1, 1]} />
      </ComponentBlock>
      <ComponentBlock $h={53.5}>
        <ComponentHead>
          <HeadIcons $w={32}><Fold /><ScriptIcon /></HeadIcons><HeadTitle>Puzzle Game Controller (Script)</HeadTitle><BookIcon /><Gap $w={4} /><GearIcon />
        </ComponentHead>
        <PropRow $dim>Script</PropRow>
        <PropRow>M View</PropRow>
        <PropRow>Puzzle D</PropRow>
      </ComponentBlock>
      <ComponentBlock $h={53.5}>
        <ScriptHead title="Pu" />
        <PropRow $dim>Script</PropRow>
        <PropRow>M Puzzle</PropRow>
        <PropRow>M Contro</PropRow>
      </ComponentBlock>
      <ComponentBlock $h={190.5}>
        <ScriptHead title="Pu" checked />
        <PropRow $dim>Script</PropRow>
        <PropRow>M Contro</PropRow>
        <PropRow />
        <PropRow><Gap $w={84} /><Field $w={109} /></PropRow>
        <PropRow><PropLabel $w={84}>Width</PropLabel><Field $w={109}>3</Field></PropRow>
        <PropRow $h={13}>Puzzle Scale</PropRow>
        <WideVector values={[1, 1, 1]} />
        <PropRow $h={13.5}>Puzzle Position</PropRow>
        <WideVector values={[0, 0, 0]} />
        <PropRow $h={13.5}><PropLabel $w={84}>Seperation Between</PropLabel><Field $w={109}>0.5</Field></PropRow>
        <PropRow><PropLabel $w={84}>Tile</PropLabel><Field $w={96}><PrefabIcon />PuzzleSlideTile</Field><Gap $w={6} /><TargetIcon /></PropRow>
        <PropRow><PropLabel $w={84}>Puzzle Shader</PropLabel><Field $w={96}><ShaderIcon />Sprites/Default</Field><Gap $w={6} /><TargetIcon /></PropRow>
        <PropRow><PropLabel $w={85}>Complete</PropLabel><Check /></PropRow>
        <PropRow><PropLabel $w={85}>Enable Tapping</PropLabel><Check /></PropRow>
      </ComponentBlock>
      <AddArea><AddButton>Add Component</AddButton></AddArea>
    </InspectorBody>
  </InspectorPanel>
);

const WarnIcon = () => <svg width="9" height="8" viewBox="0 0 9 8"><path d="M4.500.6 8.400 7.400H.6z" fill="#eee" stroke="#555" strokeWidth=".8" /><path d="M4.500 3v2.500" stroke="#555" strokeWidth=".8" /></svg>;
const NoteIcon = () => <svg width="10" height="9" viewBox="0 0 10 9"><ellipse cx="5" cy="4.500" rx="4.600" ry="4" fill="#eee" stroke="#666" strokeWidth=".8" /><path d="M5 2v3M5 6v1" stroke="#555" /></svg>;
const ErrorIcon = () => <svg width="10" height="10" viewBox="0 0 10 10"><path d="M3 0h4l3 3v4l-3 3H3L0 7V3z" fill="#555" /><path d="M5 2v4M5 7v1.300" stroke="#eee" strokeWidth="1.300" /></svg>;

const Unity = () => (
  <UnityWindow>
    <TitleBar>
      <TitleIcon><UnityLogo size={12} plate="#d9c3a8" /></TitleIcon>
      Unity Personal (64bit) - Adam.unity - Unity - PC, Mac &amp; Linux Standalone &lt;DX11&gt;
      <Spacer />
      <WindowButtons>
        <svg width="32" height="13" viewBox="0 0 32 13"><path d="M0 8.500h6" stroke="#222" strokeWidth="1.500" /><path d="M18.500 5.500h5v4h-5zM20.500 5V3.500h4.500v4h-1" fill="none" stroke="#222" /></svg>
        <CloseButton><SmallX s={5} w={1.3} /></CloseButton>
      </WindowButtons>
    </TitleBar>
    <MenuBar>{MENUS.map(([m, w]) => <MenuEntry key={m} $w={w}>{m}</MenuEntry>)}</MenuBar>
    <Toolbar>
      <ButtonGroup>
        <ToolButton $w={23}><HandIcon /></ToolButton>
        <ToolButton $w={22}><MoveIcon /></ToolButton>
        <ToolButton $w={23}><RotateIcon /></ToolButton>
        <ToolButton $w={22}><ScaleIcon /></ToolButton>
        <ToolButton $w={22} $pressed><RectIcon /></ToolButton>
      </ButtonGroup>
      <Gap $w={14} />
      <ButtonGroup $h={14}>
        <ToolButton $w={45}><PivotIcon />Center</ToolButton>
        <ToolButton $w={44}><LocalIcon />Local</ToolButton>
      </ButtonGroup>
      <Gap $w={250} />
      <ButtonGroup $h={16}>
        <ToolButton $w={23}><PlayIcon /></ToolButton>
        <ToolButton $w={22}><PauseIcon /></ToolButton>
        <ToolButton $w={22}><StepIcon /></ToolButton>
      </ButtonGroup>
      <Spacer />
      <ButtonGroup $h={14}><ToolButton $w={21}><CloudIcon /></ToolButton></ButtonGroup>
      <Gap $w={7} />
      <DropButton $w={57}>Account<Caret /></DropButton>
      <Gap $w={14} />
      <DropButton $w={57}>Layers<Caret /></DropButton>
      <Gap $w={7} />
      <DropButton $w={57}>Layout<Caret /></DropButton>
    </Toolbar>
    <Workspace>
      <DockColumn>
        <UpperDock>
          <Panel $w={161} $edge>
            <TabRow>
              <Tab $w={70} $pad={5.5} $on><ListIcon />Hierarchy</Tab>
              <TabTools><Lock /><PanelMenu /></TabTools>
            </TabRow>
            <Strip>
              <StripCell $w={4} $line />
              <StripCell $w={37} $line>Create<Caret $s={1.5} /></StripCell>
              <Gap $w={5} /><Search w={106} />
            </Strip>
            <HierarchyList>
              <HierarchyRow $indent={11.5}>Main Camera</HierarchyRow>
              <HierarchyRow $indent={3}><Fold />Canvas</HierarchyRow>
              <HierarchyRow $indent={21.5} $on>PuzzleMinigame</HierarchyRow>
              <HierarchyRow $indent={11.5}>EventSystem</HierarchyRow>
            </HierarchyList>
          </Panel>
          <Panel $w={651} $edge>
            <TabRow>
              <Tab $w={70} $pad={5.5} $on><SceneIcon />Scene</Tab>
              <Tab $w={70} $pad={8}><GameIcon />Game</Tab>
              <Tab $w={72} $pad={7}><AnimatorIcon />Animator</Tab>
              <Tab $w={70} $pad={8}><StoreIcon />Asset Store</Tab>
              <TabTools><PanelMenu /></TabTools>
            </TabRow>
            <Strip>
              <Gap $w={7} />
              <StripText $w={76}>Shaded</StripText>
              <StripCell $w={8} $line><Caret $s={1.5} /></StripCell>
              <Gap $w={2} />
              <StripCell $w={18} $on $size={7.6}>2D</StripCell>
              <Gap $w={4} />
              <StripCell $w={18} $on><SunIcon /></StripCell>
              <StripCell $w={19} $line><SoundIcon /></StripCell>
              <StripCell $w={26} $line><PictureIcon /><Gap $w={1} /><Caret $s={1.5} /></StripCell>
              <Spacer />
              <StripCell $w={1} $line />
              <StripCell $w={39} $line>Gizmos<Caret $s={1.5} /></StripCell>
              <Gap $w={5} /><Search w={146} /><Gap $w={4} />
            </Strip>
            <SceneView><SceneCanvas /></SceneView>
          </Panel>
        </UpperDock>
        <Panel $w={815}>
          <TabRow $h={15}>
            <Tab $w={71} $pad={5.5}><FolderOutline /><span>Project</span></Tab>
            <Tab $w={70} $pad={7} $on><ConsoleIcon />Console</Tab>
            <TabTools><PanelMenu /></TabTools>
          </TabRow>
          <Strip>
            <StripCell $w={4} $line />
            <StripCell $w={27} $line>Clear</StripCell>
            <Gap $w={4} />
            <StripCell $w={37} $on>Collapse</StripCell>
            <Gap $w={1} />
            <StripCell $w={54} $on>Clear on Play</StripCell>
            <StripCell $w={50} $line $size={7.3}>Error Pause</StripCell>
            <Spacer />
            <StripCell $w={23} $on><NoteIcon />0</StripCell>
            <Gap $w={1} />
            <StripCell $w={23} $on><WarnIcon />0</StripCell>
            <Gap $w={1} />
            <StripCell $w={22} $on><ErrorIcon />0</StripCell>
            <Gap $w={4} />
          </Strip>
        </Panel>
        <ConsoleBody><ConsoleLog /></ConsoleBody>
      </DockColumn>
      <Inspector />
    </Workspace>
    <StatusBar />
  </UnityWindow>
);

const Taskbar = ({ tray }: { tray?: boolean }) => (
  <TaskbarRow>
    <TaskSlot $w={37}><WindowsFlag size={19} /></TaskSlot>
    <TaskSlot $w={42} $state="open"><ExplorerIcon /></TaskSlot>
    <Gap $w={2} />
    <TaskSlot $w={37} $state="open"><ChromeIcon /></TaskSlot>
    <StackEdge />
    <TaskSlot $w={28}><MonitorIcon /></TaskSlot>
    <Gap $w={18} />
    <TaskSlot $w={24}><SpeakerIcon /></TaskSlot>
    <Gap $w={11} />
    <TaskSlot $w={42} $state="active"><UnityLogo size={21} /></TaskSlot>
    {tray && (
      <Tray>
        <svg width="6" height="4" viewBox="0 0 6 4"><path d="M3 0l3 4H0z" fill="#fff" /></svg>
        <FlagTray /><WindowsFlag size={11} /><NetTray /><SoundIcon color="#fff" />
        <Clock>20:29<br />2016-04-12</Clock>
      </Tray>
    )}
  </TaskbarRow>
);

/* ---------- browser parts ---------- */
const BOOKMARKS: [string, number, React.ReactNode, number?][] = [
  ["Aplikacje", 57, <AppsIcon />],
  ["GIFY", 40, <BookFolder />],
  ["studia", 48, <BookFolder />],
  ["Gmail - Odebrane - a", 106, <GmailIcon />, 96],
  ["GUPOTY", 56, <BookFolder />],
  ["unity", 43, <BookFolder />],
  ["AnSharStudios", 79, <BookFolder />],
  ["GAMEDEV", 62.5, <BookFolder />],
  ["GRAFIKA", 57, <BookFolder />],
  ["Moje marzenia", 82, <BookFolder />],
  ["Magisterka", 65, <BookFolder />],
  ["Programming", 78, <BookFolder />],
  ["Profil Zaufany ePUAP", 156.5, <EagleIcon />, 98],
];

type Glyph = { ch: string; advance: number; stretch: number; shift: number };
const METRICS: Record<string, [number, number]> = {
  A: [-9.6, 145.4], L: [-5, 103.7], E: [-5, 125.9], K: [-5, 153.8], S: [-5.9, 134.3], O: [2.4, 138.9],
  G: [2.4, 138], R: [-5, 134.3], N: [-5, 152.8], I: [-5, 67.5], J: [-4.1, 121.3],
};
/* each entry: letter, left edge of its ink, width of its ink */
const setLine = (spec: [string, number, number][]): Glyph[] =>
  spec.map(([ch, x, w], i) => {
    const [bearing, ink] = METRICS[ch];
    const stretch = w / ink;
    return { ch, stretch, shift: -bearing * stretch, advance: i + 1 < spec.length ? spec[i + 1][1] - x : w };
  });
const LINE_ONE = setLine([["A", 267, 110], ["L", 390, 71], ["E", 471, 93], ["K", 564, 121], ["S", 679, 90]]);
const LINE_TWO = setLine([["O", 16, 110], ["G", 138, 110], ["A", 242, 110], ["R", 363, 110], ["N", 476, 121], ["I", 598, 59], ["J", 651, 87], ["S", 791, 90], ["I", 882, 59], ["E", 942, 93]]);

const Big = ({ left, glyphs }: { left: number; glyphs: Glyph[] }) => (
  <BigLine $left={left}>
    {glyphs.map((g, i) => <BigLetter key={i} $advance={g.advance} $stretch={g.stretch} $shift={g.shift}>{g.ch}</BigLetter>)}
  </BigLine>
);

const Browser = () => (
  <>
    <TabStrip>
      <Gap $w={4} />
      <BrowserTab $w={140} $pad={11}>
        <TwitchIcon /><TabTitle $w={90}>Outstarwalker - Twitch</TabTitle><SoundIcon color="#77787e" s={7} /><Gap $w={0} /><SmallX color="#aaa" w={0.9} />
      </BrowserTab>
      <BrowserTab $w={143} $pad={8} $on>
        <BamBadge>BAM</BamBadge><TabTitle $w={102}>BIG-ASS MESSAGE</TabTitle><SmallX color="#ddd" w={0.9} />
      </BrowserTab>
      <NewTab />
      <Spacer />
      <UserChip>Adam</UserChip>
      <ChromeControls>
        <ChromeControl $w={18}><svg width="7" height="2" viewBox="0 0 7 2"><path d="M0 1h7" stroke="#ddd" strokeWidth="1.600" /></svg></ChromeControl>
        <ChromeControl $w={18}><svg width="8" height="8" viewBox="0 0 8 8"><path d="M.5 2.500h5v5h-5zM2.500 2V.5h5v5H6" fill="none" stroke="#ddd" /></svg></ChromeControl>
        <ChromeControl $w={28}><SmallX s={6} color="#eee" /></ChromeControl>
      </ChromeControls>
    </TabStrip>
    <NavBar>
      <BackIcon /><Gap $w={9} /><BackIcon dim /><Gap $w={10} /><ReloadIcon />
      <AddressBox>
        <PageIcon /><UrlText>bigassmessage.com<em>/#</em></UrlText><Spacer /><TranslateIcon /><Gap $w={3} /><StarIcon />
      </AddressBox>
      <AdblockIcon /><Gap $w={10} /><ForwardIcon /><Gap $w={11} /><BulbIcon /><Spacer /><BurgerIcon />
    </NavBar>
    <BookmarkBar>
      {BOOKMARKS.map(([t, w, icon, fade]) => <Bookmark key={t} $w={w} $fade={fade}>{icon}<span>{t}</span></Bookmark>)}
      <Bookmark $w={12}>»</Bookmark>
      <BarDivider />
      <Bookmark $w={68}><BookFolder /><span>Inne zakładki</span></Bookmark>
    </BookmarkBar>
    <Page>
      <Big left={267} glyphs={LINE_ONE} />
      <Big left={16} glyphs={LINE_TWO} />
    </Page>
  </>
);

export default function App() {
  return (
    <>
      <Global />
      <Desktop>
        <Monitor>
          <Unity />
          <Taskbar tray />
          <ContextMenu>
            <MenuItem>Reset</MenuItem>
            <MenuRule />
            <MenuItem>Remove Component</MenuItem>
            <MenuItem $dim>Move Up</MenuItem>
            <MenuItem>Move Down</MenuItem>
            <MenuItem>Copy Component</MenuItem>
            <MenuItem $dim>Paste Component As New</MenuItem>
            <MenuItem $dim>Paste Component Values</MenuItem>
            <MenuRule />
            <MenuItem>Edit Script</MenuItem>
            <MenuRule />
            <MenuItem>Play</MenuItem>
          </ContextMenu>
          <ArrowLayer width="1024" height="640" viewBox="0 0 1024 640">
            <path d="M102 110 201 101.500 190 125 264.500 163 241 210 165 173 153 195z" fill="#f00" />
            <path d="M532 265H706V225L879 305 706 385V345H532z" fill="#f00" />
          </ArrowLayer>
        </Monitor>
        <Monitor>
          <Browser />
          <Taskbar />
        </Monitor>
      </Desktop>
    </>
  );
}
